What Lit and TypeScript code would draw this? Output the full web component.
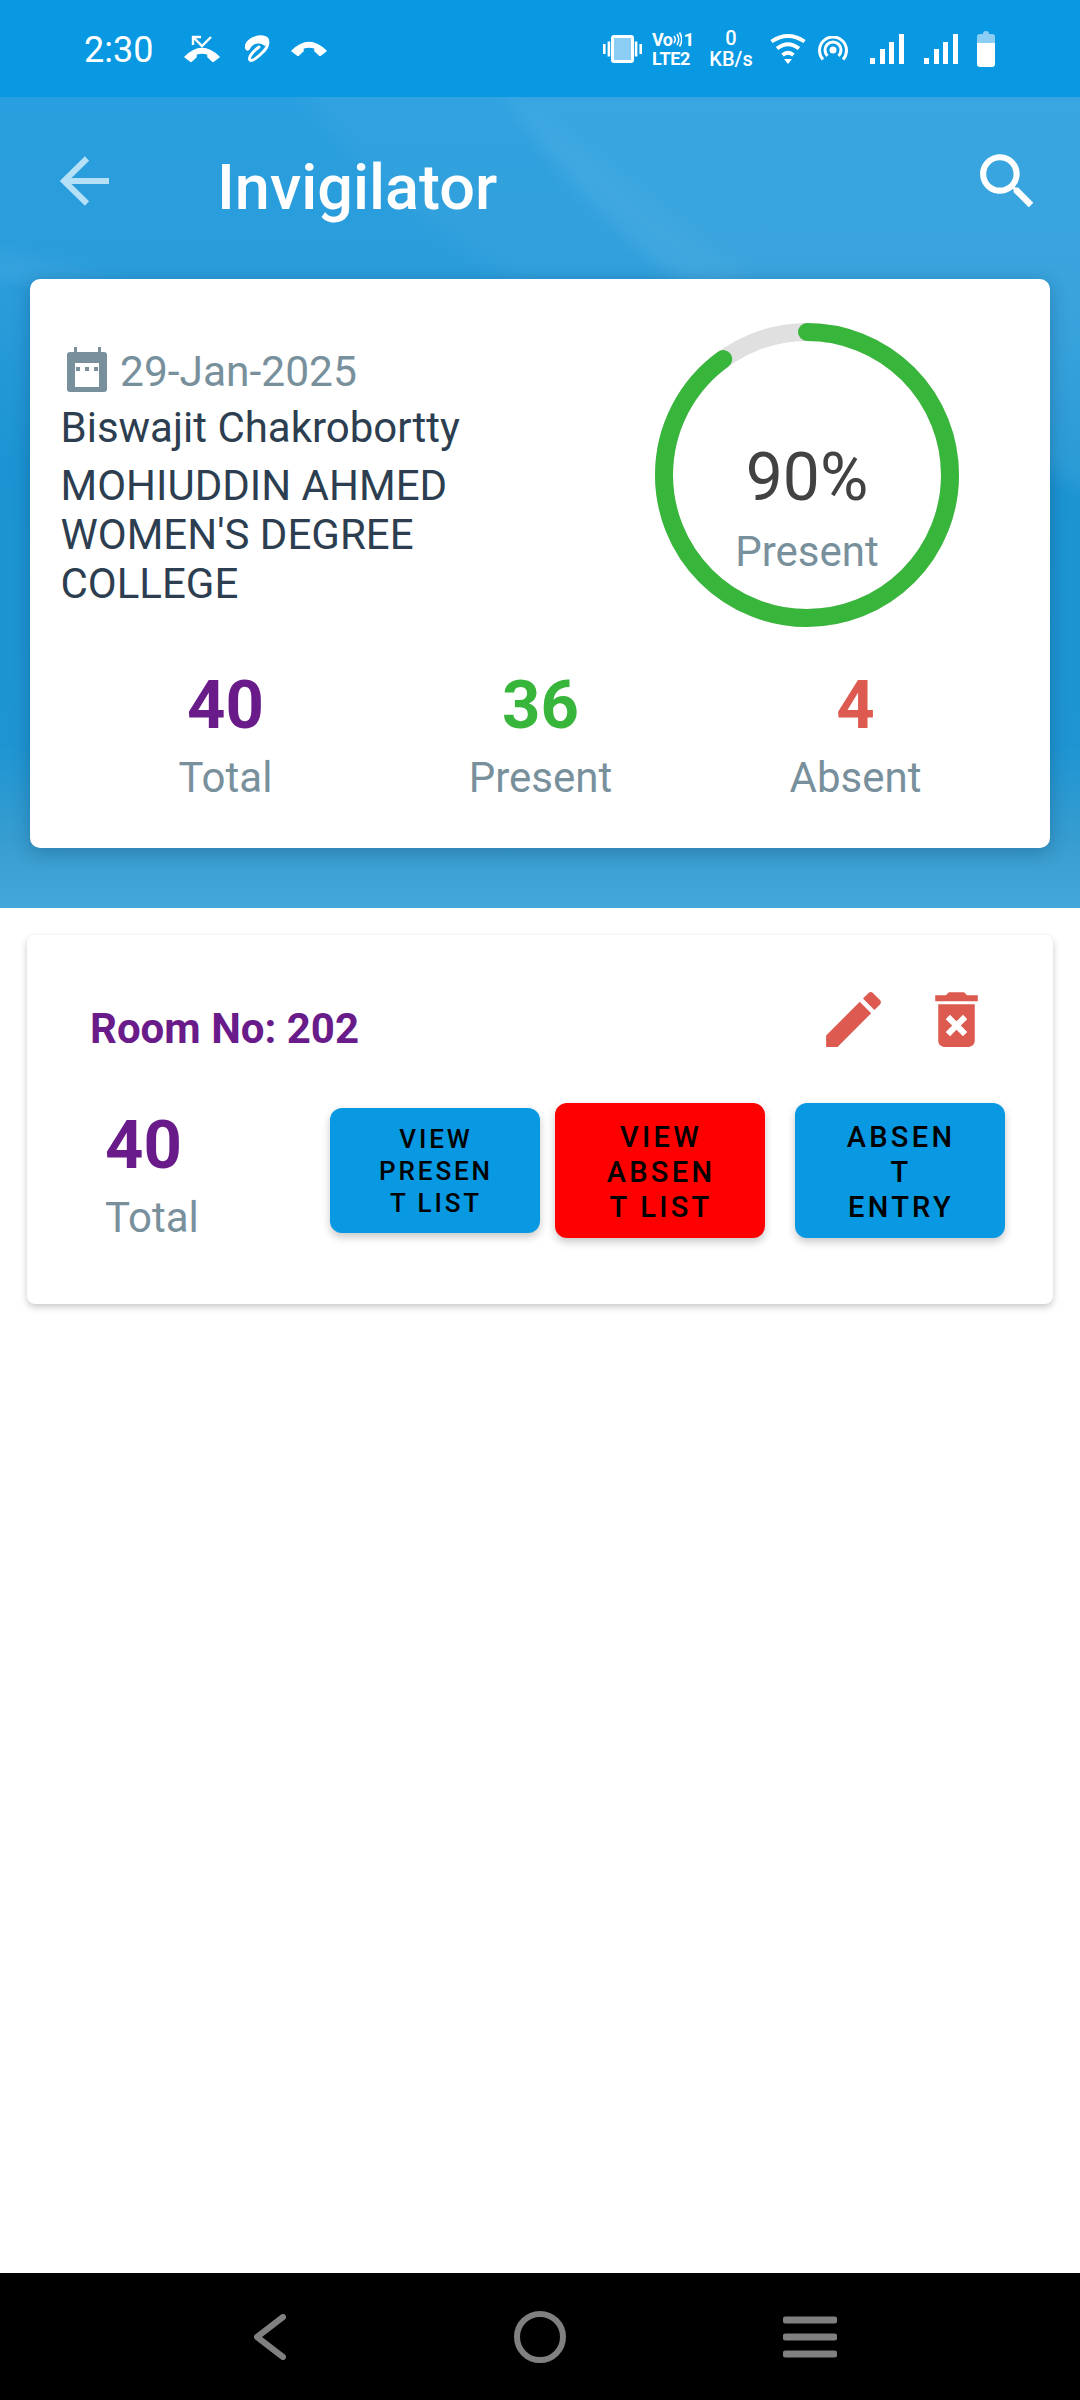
// invigilator attendance screen
import { LitElement, html, css, svg } from 'lit';
import { customElement, property } from 'lit/decorators.js';

const handset = (y: number) => svg`<path transform="translate(0 ${y})" d="M1 10 Q18 -7 35 10 L29 14.500 L24 10 L24 7 Q18 5 12 7 L12 10 L7 14.500 Z" fill="#fff" stroke="#fff" stroke-width="1.5" stroke-linejoin="round"/>`;

@customElement('stat-block')
export class StatBlock extends LitElement {
  @property() value = '';
  @property() label = '';
  @property() color = '#6a1b8a';

  static styles = css`
    :host {
      display: flex;
      flex-direction: column;
      align-items: inherit;
    }
    .num {
      font-size: 67px;
      line-height: 80px;
      font-weight: 700;
    }
    .label {
      font-size: 42px;
      line-height: 50px;
      color: #78909c;
      margin-top: 8px;
    }
  `;

  render() {
    return html`
      <div class="num" style="color:${this.color}">${this.value}</div>
      <div class="label">${this.label}</div>
    `;
  }
}

@customElement('app-root')
export class AppRoot extends LitElement {
  percent = 90;

  static styles = css`
    :host {
      display: flex;
      flex-direction: column;
      min-height: 2400px;
      background: #fff;
      font-family: Roboto, 'Liberation Sans', sans-serif;
    }
    svg {
      display: block;
      flex: none;
    }

    /* status bar */
    .status {
      height: 97px;
      background: #0899e2;
      display: flex;
      align-items: center;
      padding: 0 85px 0 84px;
      color: #fff;
    }
    .time {
      font-size: 36px;
      line-height: 40px;
      width: 69px;
      margin-top: 3px;
    }
    .ml-31 { margin-left: 31px; }
    .ml-23 { margin-left: 23px; }
    .ml-21 { margin-left: 21px; }
    .ml-10 { margin-left: 10px; }
    .ml-19 { margin-left: 19px; }
    .ml-17 { margin-left: 17px; }
    .ml-12 { margin-left: 12px; }
    .ml-22 { margin-left: 22px; }
    .ml-20 { margin-left: 20px; }
    .right {
      margin-left: auto;
      display: flex;
      align-items: center;
    }
    .volte {
      width: 38px;
      font-weight: 700;
      display: flex;
      flex-direction: column;
      gap: 3px;
    }
    .volte-top {
      display: flex;
      align-items: center;
      font-size: 18px;
      line-height: 16px;
      letter-spacing: -0.5px;
    }
    .volte-top span:last-child {
      margin-left: 2px;
      font-size: 19px;
    }
    .volte-bottom {
      font-size: 18px;
      line-height: 15px;
      letter-spacing: -0.3px;
      white-space: nowrap;
    }
    .net {
      width: 44px;
      text-align: center;
      font-weight: 500;
      font-size: 20px;
      line-height: 21px;
    }

    /* blue header */
    .hero {
      position: relative;
      height: 811px;
      overflow: hidden;
      background: #2a9cdb;
    }
    .hero-bg {
      position: absolute;
      left: 0;
      top: 0;
    }
    .toolbar {
      position: relative;
      height: 168px;
      margin-bottom: 14px;
      display: flex;
      align-items: center;
      padding: 0 36px 0 60px;
    }
    .title {
      margin-left: 107px;
      padding-top: 13px;
      font-size: 63px;
      line-height: 72px;
      font-weight: 500;
      color: #fff;
    }
    .search {
      margin-left: auto;
    }

    .summary {
      position: relative;
      margin: 0 30px;
      height: 569px;
      box-sizing: border-box;
      background: #fff;
      border-radius: 10px;
      box-shadow: 0 4px 18px rgba(0, 40, 80, 0.28);
      padding: 44px 37px 0 30.5px;
    }
    .top {
      display: flex;
      justify-content: space-between;
      padding-right: 54px;
    }
    .info {
      padding-top: 24px;
      width: 410px;
      color: #2c3e50;
      font-size: 42px;
    }
    .date {
      display: flex;
      align-items: center;
      height: 50px;
      font-size: 42.5px;
      line-height: 50px;
      color: #78909c;
      padding-left: 6.5px;
      gap: 13px;
    }
    .date svg {
      margin-top: -6px;
    }
    .name {
      line-height: 48px;
      margin-top: 7px;
      white-space: nowrap;
    }
    .college {
      line-height: 49px;
      margin-top: 9px;
    }
    .ring {
      display: grid;
      width: 304px;
      height: 304px;
    }
    .ring > * {
      grid-area: 1 / 1;
    }
    .ring-text {
      display: flex;
      flex-direction: column;
      align-items: center;
      padding-top: 116px;
    }
    .pct {
      font-size: 66px;
      line-height: 78px;
      color: #424242;
    }
    .pct-label {
      font-size: 42px;
      line-height: 50px;
      color: #78909c;
      margin-top: 10px;
    }
    .stats {
      display: grid;
      grid-template-columns: repeat(3, 315px);
      margin: 38px 0 0 7.5px;
      align-items: center;
      justify-items: center;
    }

    /* room card */
    .room {
      margin: 27px 27px 0;
      height: 369px;
      box-sizing: border-box;
      background: #fff;
      border-radius: 8px;
      box-shadow: 0 3px 7px rgba(0, 0, 0, 0.22);
      padding-top: 48px;
    }
    .room-head {
      display: flex;
      align-items: flex-start;
      padding: 0 60px 0 63px;
    }
    .room-title {
      font-size: 42px;
      line-height: 48px;
      font-weight: 700;
      color: #6a1b8a;
      margin-top: 22px;
    }
    .room-actions {
      margin-left: auto;
      display: flex;
      gap: 30px;
    }
    .room-body {
      display: flex;
      align-items: flex-start;
      margin-top: 47px;
      padding: 0 48px 0 78px;
    }
    .room-total {
      align-items: flex-start;
      margin-top: 2px;
      margin-right: auto;
    }
    .btn {
      width: 210px;
      height: 135px;
      display: flex;
      align-items: center;
      justify-content: center;
      box-sizing: border-box;
      padding: 3px 0 0 2px;
      text-align: center;
      color: #000;
      font-weight: 500;
      font-size: 29px;
      line-height: 35px;
      letter-spacing: 3.3px;
      border-radius: 12px;
      background: #0899e2;
      box-shadow: 0 4px 8px rgba(0, 0, 0, 0.22);
    }
    .btn.small {
      height: 125px;
      margin-top: 5px;
      padding-top: 1px;
      font-size: 26px;
      line-height: 32px;
      letter-spacing: 2.9px;
    }
    .btn.red {
      background: #ff0000;
      margin-left: 15px;
    }
    .btn.last {
      margin-left: 30px;
    }

    /* android nav */
    .spacer {
      flex: 1;
    }
    .nav {
      height: 127px;
      background: #000;
      display: grid;
      grid-template-columns: repeat(3, 270px);
      justify-content: center;
      align-items: center;
      justify-items: center;
    }
  `;

  statusBar() {
    return html`
      <div class="status">
        <div class="time">2:30</div>
        <svg class="ml-31" width="36" height="27" viewBox="0 0 36 27">
          <path d="M9 10 V2 H17 M9 2 L18 11 L27 2" fill="none" stroke="#fff" stroke-width="2.4"/>
          ${handset(12)}
        </svg>
        <svg class="ml-23" width="27" height="28" viewBox="0 0 27 28">
          <path d="M4 13 C2 7 12 1 20 2 C27 3 26 11 20 17 C15 22 9 27 7 25 C5 23 9 17 16 12" fill="none" stroke="#fff" stroke-width="3" stroke-linecap="round"/>
          <path d="M2 13 C1 6 11 0 20 1 C26 2 26 8 22 11 C16 6 9 9 7 14 C5 17 3 16 2 13 Z" fill="#fff"/>
        </svg>
        <svg class="ml-21" width="36" height="15" viewBox="0 0 36 15">${handset(0)}</svg>
        <div class="right">
          <svg width="39" height="28" viewBox="0 0 39 28">
            <rect x="9.500" y="1.500" width="20" height="25" rx="1.500" fill="#8ccdf3" stroke="#fff" stroke-width="3"/>
            <rect x="0" y="9" width="2.600" height="10" fill="#fff"/>
            <rect x="4.600" y="6.500" width="2.600" height="15" fill="#fff"/>
            <rect x="31.800" y="6.500" width="2.600" height="15" fill="#fff"/>
            <rect x="36.400" y="9" width="2.600" height="10" fill="#fff"/>
          </svg>
          <div class="volte ml-10">
            <div class="volte-top">
              <span>Vo</span>
              <svg width="9" height="15" viewBox="0 0 9 15">
                <path d="M1 4 Q3.500 7.500 1 11 M4 2 Q7.500 7.500 4 13 M6.500 0.500 Q11 7.500 6.500 14.500" fill="none" stroke="#fff" stroke-width="1.500"/>
              </svg>
              <span>1</span>
            </div>
            <div class="volte-bottom">LTE2</div>
          </div>
          <div class="net ml-19">0<br />KB/s</div>
          <svg class="ml-17" width="36" height="30" viewBox="0 0 36 30">
            <path d="M1.500 7.500 Q18 -3.500 34.500 7.500 M7 14.500 Q18 6 29 14.500 M12.500 21 Q18 16.500 23.500 21" fill="none" stroke="#fff" stroke-width="3.800"/>
            <path d="M14 25 H22 L18 30 Z" fill="#fff"/>
          </svg>
          <svg class="ml-12" width="30" height="26" viewBox="0 0 30 26">
            <circle cx="15" cy="14" r="3.500" fill="#fff"/>
            <path d="M9.500 19.800 A8 8 0 1 1 20.500 19.800 M5 23.500 A13.500 13.500 0 1 1 25 23.500" fill="none" stroke="#fff" stroke-width="3"/>
          </svg>
          ${[22, 20].map(
            (gap) => html`
              <svg class="ml-${gap}" width="34" height="30" viewBox="0 0 34 30">
                <path d="M0 24h5v6H0zM10 15h5v15h-5zM19 8h5v22h-5zM29 0h5v30h-5z" fill="#fff"/>
              </svg>
            `,
          )}
          <svg class="ml-19" width="18" height="36" viewBox="0 0 18 36">
            <path d="M6 3 Q6 0 9 0 Q12 0 12 3 H15 Q18 3 18 6 V12 H0 V6 Q0 3 3 3 Z" fill="#8ccdf3"/>
            <path d="M0 12 H18 V33 Q18 36 15 36 H3 Q0 36 0 33 Z" fill="#fff"/>
          </svg>
        </div>
      </div>
    `;
  }

  // soft wave pattern behind the header
  heroBackground() {
    return html`
      <svg class="hero-bg" width="1080" height="811" viewBox="0 0 1080 811">
        <defs>
          <linearGradient id="base" x1="0" y1="0" x2="0" y2="1">
            <stop offset="0" stop-color="#2a9fdf"/>
            <stop offset="0.25" stop-color="#2a9cda"/>
            <stop offset="0.45" stop-color="#1c94d3"/>
            <stop offset="0.8" stop-color="#1e95d2"/>
            <stop offset="0.93" stop-color="#3a9ed0"/>
            <stop offset="1" stop-color="#44a7d9"/>
          </linearGradient>
          <filter id="soft" x="-10%" y="-10%" width="120%" height="120%">
            <feGaussianBlur stdDeviation="9"/>
          </filter>
        </defs>
        <rect width="1080" height="811" fill="url(#base)"/>
        <path d="M500 -10 C570 90 620 140 700 200 L1100 400 L1100 -10 Z" fill="#fff" opacity="0.07" filter="url(#soft)"/>
        <path d="M300 -10 C360 80 440 150 520 185 L760 185 L500 -10 Z" fill="#fff" opacity="0.03" filter="url(#soft)"/>
        <path d="M-10 150 C50 165 100 180 140 185 L-10 185 Z" fill="#fff" opacity="0.05" filter="url(#soft)"/>
      </svg>
    `;
  }

  summaryCard() {
    const r = 143;
    const len = 2 * Math.PI * r;
    return html`
      <div class="summary">
        <div class="top">
          <div class="info">
            <div class="date">
              <svg width="40" height="45" viewBox="0 0 40 45">
                <path d="M7 0h3v5h21V0h3v5h3q3 0 3 3v34q0 3-3 3H3q-3 0-3-3V8q0-3 3-3h4zM8 16v24h24V16z" fill="#78909c" fill-rule="evenodd"/>
                <path d="M9 20h4v4H9zM18 20h4v4h-4zM27 20h4v4h-4z" fill="#78909c"/>
              </svg>
              <span>29-Jan-2025</span>
            </div>
            <div class="name">Biswajit Chakrobortty</div>
            <div class="college">MOHIUDDIN AHMED<br />WOMEN'S DEGREE<br />COLLEGE</div>
          </div>
          <div class="ring">
            <svg width="304" height="304" viewBox="0 0 304 304">
              <circle cx="152" cy="152" r="${r}" fill="none" stroke="#e0e0e0" stroke-width="18"/>
              <circle cx="152" cy="152" r="${r}" fill="none" stroke="#38b53b" stroke-width="18" stroke-linecap="round"
                stroke-dasharray="${(len * this.percent) / 100} ${len}" transform="rotate(-90 152 152)"/>
            </svg>
            <div class="ring-text">
              <div class="pct">${this.percent}%</div>
              <div class="pct-label">Present</div>
            </div>
          </div>
        </div>
        <div class="stats">
          <stat-block value="40" label="Total" color="#6a1b8a"></stat-block>
          <stat-block value="36" label="Present" color="#38b53b"></stat-block>
          <stat-block value="4" label="Absent" color="#dc5a50"></stat-block>
        </div>
      </div>
    `;
  }

  roomCard() {
    return html`
      <div class="room">
        <div class="room-head">
          <div class="room-title">Room No: 202</div>
          <div class="room-actions">
            <svg width="73" height="73" viewBox="0 0 24 24">
              <path fill="#dc5a50" d="M20.71 7.04c.39-.39.39-1.04 0-1.41l-2.34-2.34c-.37-.39-1.02-.39-1.41 0l-1.84 1.83 3.75 3.75M3 17.25V21h3.750L17.81 9.930l-3.750-3.750L3 17.250z"/>
            </svg>
            <svg width="73" height="73" viewBox="0 0 24 24">
              <path fill="#dc5a50" d="M6 19c0 1.100.9 2 2 2h8c1.100 0 2-.9 2-2V7H6v12zm2.460-7.120l1.410-1.410L12 12.590l2.120-2.120 1.410 1.410L13.410 14l2.120 2.120-1.410 1.410L12 15.410l-2.130 2.130-1.410-1.410L10.590 14l-2.130-2.120zM15.500 4l-1-1h-5l-1 1H5v2h14V4z"/>
            </svg>
          </div>
        </div>
        <div class="room-body">
          <stat-block class="room-total" value="40" label="Total" color="#6a1b8a"></stat-block>
          <div class="btn small">VIEW<br />PRESEN<br />T LIST</div>
          <div class="btn red">VIEW<br />ABSEN<br />T LIST</div>
          <div class="btn last">ABSEN<br />T<br />ENTRY</div>
        </div>
      </div>
    `;
  }

  render() {
    return html`
      ${this.statusBar()}
      <div class="hero">
        ${this.heroBackground()}
        <div class="toolbar">
          <svg width="50" height="50" viewBox="0 0 50 50">
            <path d="M49 25H4M27 2.500L4 25l23 22.500" fill="none" stroke="#b5e0f6" stroke-width="6"/>
          </svg>
          <div class="title">Invigilator</div>
          <svg class="search" width="73" height="73" viewBox="0 0 24 24">
            <path fill="#fff" d="M15.500 14h-.79l-.28-.27C15.410 12.590 16 11.110 16 9.500 16 5.910 13.090 3 9.500 3S3 5.910 3 9.500 5.910 16 9.500 16c1.610 0 3.090-.59 4.230-1.570l.27.28v.79l5 4.990L20.490 19l-4.990-5zm-6 0C7.010 14 5 11.990 5 9.500S7.010 5 9.500 5 14 7.010 14 9.500 11.990 14 9.500 14z"/>
          </svg>
        </div>
        ${this.summaryCard()}
      </div>
      ${this.roomCard()}
      <div class="spacer"></div>
      <div class="nav">
        <svg width="32" height="46" viewBox="0 0 32 46">
          <path d="M29 3L3 23L29 43" fill="none" stroke="#808080" stroke-width="6" stroke-linecap="round" stroke-linejoin="round"/>
        </svg>
        <svg width="52" height="52" viewBox="0 0 52 52">
          <circle cx="26" cy="26" r="23" fill="none" stroke="#808080" stroke-width="6"/>
        </svg>
        <svg width="54" height="42" viewBox="0 0 54 42">
          <path d="M3 4h48M3 21h48M3 38h48" fill="none" stroke="#808080" stroke-width="7" stroke-linecap="round"/>
        </svg>
      </div>
    `;
  }
}
